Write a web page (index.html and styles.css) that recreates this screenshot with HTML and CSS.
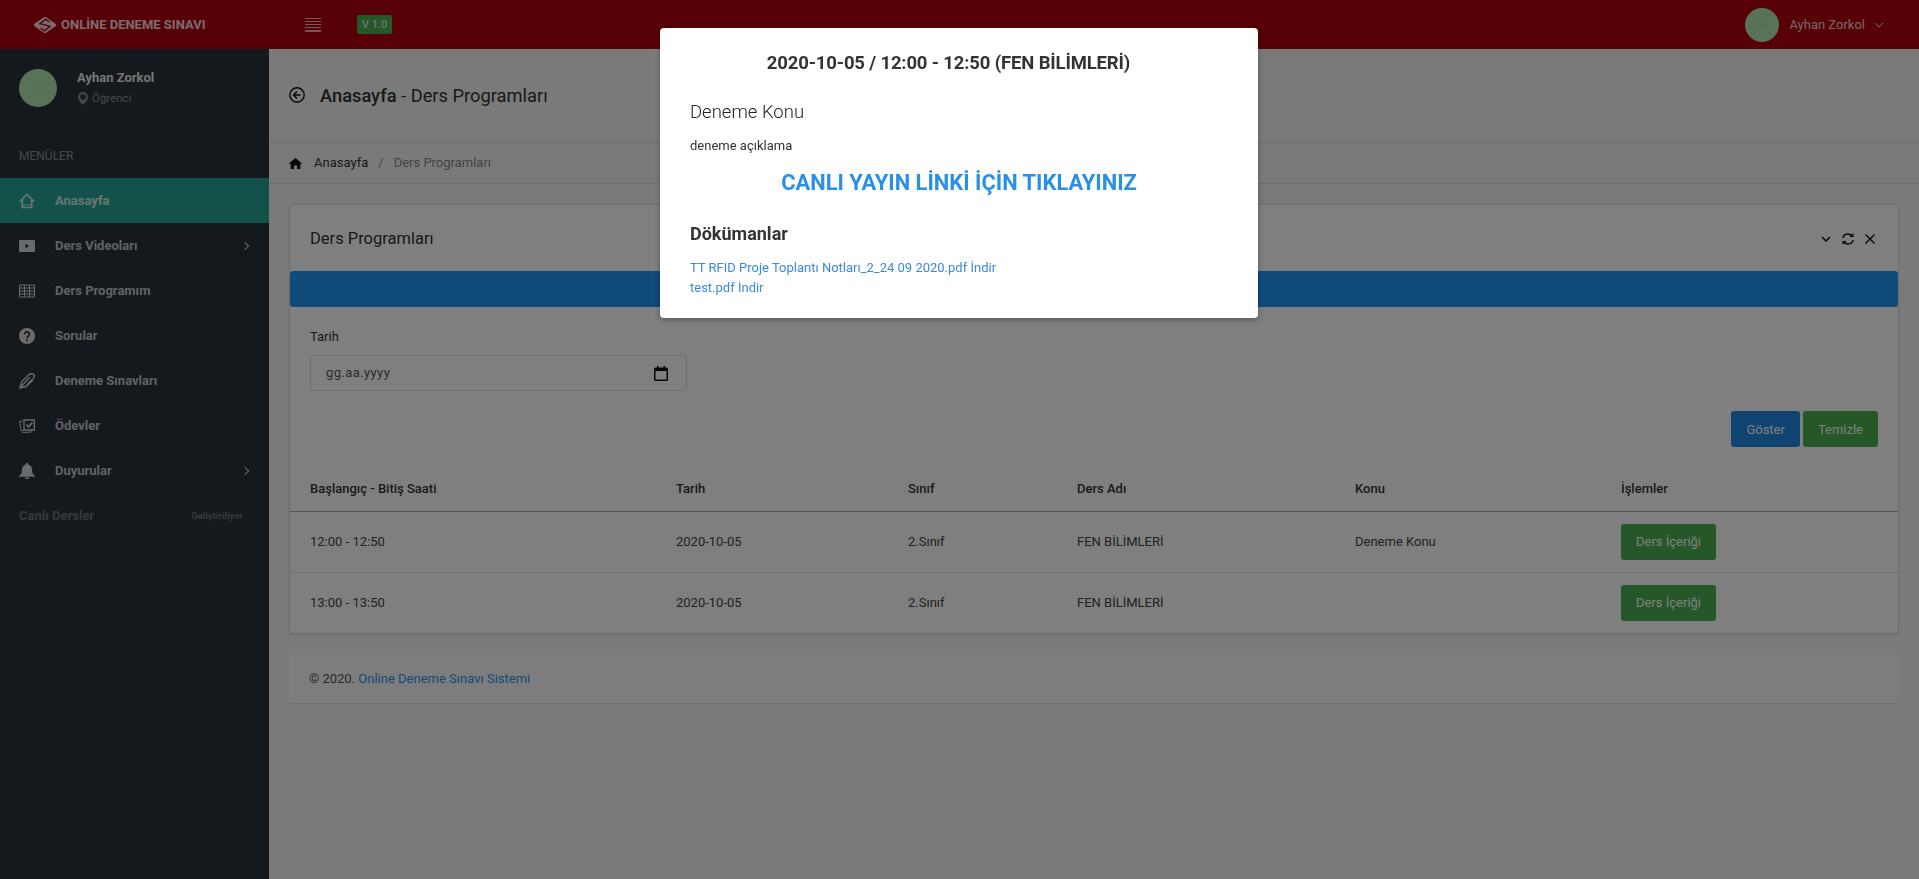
FILE: index.html
```html
<!DOCTYPE html>
<html lang="tr">
<head>
<meta charset="utf-8">
<title>Online Deneme Sınavı - Ders Programları</title>
<link rel="stylesheet" href="styles.css">
</head>
<body>

<div class="navbar">
	<div class="brand">
		<svg class="brand-logo" viewBox="0 0 22 16" width="22" height="16"><path fill="#fff" opacity=".85" d="M9.500 .6a2 2 0 0 1 3 0l9 6.200a1.400 1.400 0 0 1 0 2.400l-9 6.200a2 2 0 0 1-3 0l-9-6.200a1.400 1.400 0 0 1 0-2.400z"/><path d="M15.500 5 11.500 2.200 6 6.600 16 9.400 10.500 13.800 6.500 11" fill="none" stroke="#ae000c" stroke-width="1.400"/></svg>
		<span class="brand-text">ONLİNE DENEME SINAVI</span>
	</div>
	<div class="toggler"><span></span><span></span><span></span><span></span><span></span></div>
	<span class="version">V 1.0</span>
	<div class="nav-user">
		<svg class="avatar-s" viewBox="0 0 34 34"><circle cx="17" cy="17" r="17" fill="#b0e6b0"/><path d="M6 6 28 28M28 6 6 28" stroke="#a4d8a4" stroke-width="1"/></svg>
		<span class="nav-name">Ayhan Zorkol</span>
		<svg class="nav-caret" viewBox="0 0 10 6" width="10" height="6"><path d="M1 1l4 4 4-4" fill="none" stroke="#fff" stroke-width="1"/></svg>
	</div>
</div>

<div class="wrap">
	<div class="sidebar">
		<div class="side-user">
			<svg class="avatar" viewBox="0 0 38 38"><circle cx="19" cy="19" r="19" fill="#b0e6b0"/><path d="M6 6 32 32M32 6 6 32" stroke="#a4d8a4" stroke-width="1"/></svg>
			<div>
				<div class="side-name">Ayhan Zorkol</div>
				<div class="side-role"><svg viewBox="0 0 10 13" width="10" height="13"><path fill-rule="evenodd" fill="#fff" d="M5 0a5 5 0 0 1 5 5c0 3-3 6.200-5 8-2-1.800-5-5-5-8a5 5 0 0 1 5-5zm0 2.200a2.800 2.800 0 1 0 0 5.600 2.800 2.800 0 0 0 0-5.600z"/></svg>Öğrenci</div>
			</div>
		</div>
		<div class="side-head">MENÜLER</div>
		<ul class="menu">
			<li class="active">
				<svg viewBox="0 0 16 15"><path d="M.8 7.800 8 1.200l7.200 6.600M3.300 6.500v7.500h9.400V6.500" fill="none" stroke="#fff" stroke-width="1.700"/><path d="M3.300 11.500h9.400" stroke="#fff" stroke-width=".8"/></svg>
				<span>Anasayfa</span>
			</li>
			<li>
				<svg viewBox="0 0 16 12"><path fill-rule="evenodd" fill="#fff" d="M1.500 0h13A1.500 1.500 0 0 1 16 1.500v9a1.500 1.500 0 0 1-1.500 1.500h-13A1.500 1.500 0 0 1 0 10.500v-9A1.500 1.500 0 0 1 1.500 0zM6.500 3.800v4.400L10 6z"/></svg>
				<span>Ders Videoları</span><i class="arrow"></i>
			</li>
			<li>
				<svg viewBox="0 0 16 13"><path d="M.5.500h15v12H.5zM.5 3.500h15M.5 6.500h15M.5 9.500h15M5.500.500v12M10.500.500v12" fill="none" stroke="#fff" stroke-width="1"/></svg>
				<span>Ders Programım</span>
			</li>
			<li>
				<svg viewBox="0 0 16 16"><circle cx="8" cy="8" r="8" fill="#fff"/><path d="M5.600 6.200a2.400 2.400 0 1 1 3.700 2c-.9.600-1.300 1-1.300 1.900" fill="none" stroke="#14191e" stroke-width="1.500"/><circle cx="8" cy="12.300" r="1" fill="#14191e"/></svg>
				<span>Sorular</span>
			</li>
			<li>
				<svg viewBox="0 0 16 16"><path d="M1 15 2.800 8.500 10 1.500c2-1 4-.8 5 .2.500 2-.5 4-1.500 5.500L7 13.500zM1 15l8-9M4.500 11 11 4M8 12l5-5.500" fill="none" stroke="#fff" stroke-width="1.400"/></svg>
				<span>Deneme Sınavları</span>
			</li>
			<li>
				<svg viewBox="0 0 16 15"><path d="M5 1.500h10.300v10H5z" fill="none" stroke="#fff" stroke-width="1.300"/><path d="M7.300 6l2.200 2.500 3.800-4.300" fill="none" stroke="#fff" stroke-width="1.800"/><path d="M3.500 2.500.5 3l1.800 9.500 2.700-.5M3.300 14l9-.5v-1" fill="none" stroke="#fff" stroke-width="1"/></svg>
				<span>Ödevler</span>
			</li>
			<li>
				<svg viewBox="0 0 16 16"><path fill="#fff" d="M8 0a1.200 1.200 0 0 1 1.200 1.500C11.500 2.100 13 4 13 6.500c0 3.500.8 5 3 6.500v.8H0V13c2.200-1.500 3-3 3-6.500C3 4 4.500 2.100 6.800 1.500A1.200 1.200 0 0 1 8 0zM6 14.500h4a2 2 0 0 1-4 0z"/></svg>
				<span>Duyurular</span><i class="arrow"></i>
			</li>
			<li class="muted">
				<span>Canlı Dersler</span><small>Geliştiriliyor</small>
			</li>
		</ul>
	</div>

	<div class="content">
		<div class="page-header">
			<svg viewBox="0 0 16 16" width="16" height="16"><circle cx="8" cy="8" r="7.200" fill="none" stroke="#111" stroke-width="1.400"/><path d="M8 4.500 4.500 8 8 11.500M4.500 8h7" fill="none" stroke="#111" stroke-width="1.400"/></svg>
			<h4><b>Anasayfa</b> - Ders Programları</h4>
		</div>
		<div class="breadcrumb">
			<svg viewBox="0 0 13 11" width="13" height="11"><path fill="#111" d="M6.500 0 13 5.500l-.7.800-1-.8V11H8V7.500H5V11H1.700V5.500l-1 .8L0 5.500z"/></svg>
			<span class="crumb">Anasayfa</span><span class="sep">/</span><span class="crumb-now">Ders Programları</span>
		</div>

		<div class="page-body">
			<div class="card">
				<div class="card-head">
					<h5>Ders Programları</h5>
					<div class="card-tools">
						<svg viewBox="0 0 12 12" width="12" height="12"><path d="M2 4l4 4 4-4" fill="none" stroke="#111" stroke-width="1.500"/></svg>
						<svg viewBox="0 0 14 14" width="14" height="14"><path d="M2 6C2.300 3.500 4.500 2 7 2c1.700 0 3 .7 4 2M12 8c-.3 2.500-2.500 4-5 4-1.700 0-3-.7-4-2" fill="none" stroke="#111" stroke-width="1.500"/><path d="M12.500 1v4h-4zM1.500 13V9h4z" fill="#111"/></svg>
						<svg viewBox="0 0 12 12" width="12" height="12"><path d="M1.500 1.500l9 9M10.500 1.500l-9 9" fill="none" stroke="#111" stroke-width="1.400"/></svg>
					</div>
				</div>
				<div class="blue-bar"></div>
				<div class="filter">
					<label>Tarih</label>
					<div class="date-input">
						<span>gg.aa.yyyy</span>
						<svg viewBox="0 0 14 15" width="14" height="15"><path fill-rule="evenodd" fill="#111" d="M3 0h1.500v1.500h5V0H11v1.500h1.500A1.500 1.500 0 0 1 14 3v10.500a1.500 1.500 0 0 1-1.500 1.500h-11A1.500 1.500 0 0 1 0 13.500V3a1.500 1.500 0 0 1 1.500-1.500H3zM1.500 5v8.500h11V5z"/></svg>
					</div>
					<div class="filter-btns">
						<button class="btn btn-blue">Göster</button>
						<button class="btn btn-green">Temizle</button>
					</div>
				</div>
				<table class="grid">
					<thead>
						<tr><th>Başlangıç - Bitiş Saati</th><th>Tarih</th><th>Sınıf</th><th>Ders Adı</th><th>Konu</th><th>İşlemler</th></tr>
					</thead>
					<tbody>
						<tr><td>12:00 - 12:50</td><td>2020-10-05</td><td>2.Sınıf</td><td>FEN BİLİMLERİ</td><td>Deneme Konu</td><td><button class="btn btn-green">Ders İçeriği</button></td></tr>
						<tr><td>13:00 - 13:50</td><td>2020-10-05</td><td>2.Sınıf</td><td>FEN BİLİMLERİ</td><td></td><td><button class="btn btn-green">Ders İçeriği</button></td></tr>
					</tbody>
				</table>
			</div>
			<div class="footer">© 2020. <a href="#">Online Deneme Sınavı Sistemi</a></div>
		</div>
	</div>
</div>

<div class="backdrop">
	<div class="modal">
		<h3 class="modal-title">2020-10-05 / 12:00 - 12:50 (FEN BİLİMLERİ)</h3>
		<div class="modal-topic">Deneme Konu</div>
		<p class="modal-desc">deneme açıklama</p>
		<a class="modal-live" href="#">CANLI YAYIN LİNKİ İÇİN TIKLAYINIZ</a>
		<h4 class="modal-docs">Dökümanlar</h4>
		<a class="modal-file" href="#">TT RFID Proje Toplantı Notları_2_24 09 2020.pdf İndir</a>
		<a class="modal-file" href="#">test.pdf İndir</a>
	</div>
</div>

</body>
</html>
```

FILE: styles.css
```css
* {
	box-sizing: border-box;
}
html, body {
	margin: 0;
	padding: 0;
	height: 100%;
	overflow: hidden;
	background-color: #f5f5f5;
	color: #333;
	font-family: Roboto, sans-serif;
	font-size: 13px;
	line-height: 20px;
}
a {
	color: #2196f3;
	text-decoration: none;
}

/* top bar */
.navbar {
	height: 49px;
	background-color: #ae000c;
	color: #fff;
	display: flex;
	align-items: center;
}
.brand {
	width: 305px;
	padding-left: 34px;
	display: flex;
	align-items: center;
	gap: 5px;
}
.brand-text {
	font-size: 13px;
	font-weight: 700;
	opacity: .85;
}
.toggler {
	width: 16px;
	height: 14px;
	display: flex;
	flex-direction: column;
	justify-content: space-between;
	margin-right: 36px;
}
.toggler span {
	height: 1.500px;
	background-color: #fff;
	opacity: .7;
}
.version {
	width: 35px;
	height: 19px;
	background-color: #4caf50;
	border-radius: 2px;
	font-size: 11px;
	font-weight: 500;
	line-height: 19px;
	text-align: center;
	color: rgba(255,255,255,.8);
}
.nav-user {
	margin-left: auto;
	padding-right: 35px;
	display: flex;
	align-items: center;
}
.avatar-s {
	width: 34px;
	height: 34px;
	margin-right: 10px;
}
.nav-name {
	margin-right: 9px;
	opacity: .8;
}
.nav-caret {
	opacity: .8;
}

/* layout */
.wrap {
	display: flex;
	height: 830px;
}
.sidebar {
	width: 269px;
	flex: none;
	background-color: #28323c;
	color: #fff;
}
.content {
	flex: 1;
}

/* sidebar */
.side-user {
	display: flex;
	gap: 20px;
	padding: 20px 19px 0;
	height: 91px;
}
.avatar {
	width: 38px;
	height: 38px;
}
.side-name {
	font-weight: 700;
	margin-top: -1px;
	opacity: .9;
}
.side-role {
	display: flex;
	align-items: center;
	gap: 4px;
	font-size: 11.500px;
	color: #fff;
	opacity: .45;
}
.side-role svg {
	margin-left: 1px;
}
.side-head {
	padding: 0 19px;
	height: 38px;
	font-size: 12px;
	line-height: 32px;
	opacity: .45;
}
.menu {
	list-style: none;
	margin: 0;
	padding: 0;
}
.menu li {
	height: 45px;
	padding: 0 19px;
	display: flex;
	align-items: center;
	font-weight: 700;
	color: rgba(255,255,255,.72);
}
.menu li svg {
	width: 16px;
	height: 16px;
	margin-right: 20px;
	opacity: .8;
}
.menu li.active {
	background-color: #26a595;
	color: rgba(255,255,255,.8);
}
.arrow {
	margin-left: auto;
	margin-right: 2px;
	width: 6px;
	height: 6px;
	border-top: 1.500px solid #fff;
	border-right: 1.500px solid #fff;
	transform: rotate(45deg);
	opacity: .8;
}
.menu li.muted {
	color: rgba(255,255,255,.32);
	justify-content: space-between;
	padding-right: 26px;
}
.muted small {
	font-size: 9.500px;
}

/* page heading */
.page-header {
	height: 94px;
	padding: 0 20px;
	display: flex;
	align-items: center;
	gap: 15px;
	border-bottom: 1px solid #ddd;
}
.page-header svg {
	flex: none;
	margin-top: -1px;
}
.page-header h4 {
	margin: 0;
	font-size: 18.300px;
	font-weight: 400;
	color: #333;
}
.page-header b {
	font-weight: 500;
}
.breadcrumb {
	height: 41px;
	padding: 0 20px;
	display: flex;
	align-items: center;
	border-bottom: 1px solid #ddd;
}
.crumb {
	margin-left: 12px;
	color: #333;
}
.sep {
	margin: 0 10px;
	color: #888;
}
.crumb-now {
	color: #888;
}

/* card */
.page-body {
	padding: 20px 20px 0;
}
.card {
	background-color: #fff;
	border: 1px solid #ddd;
	border-radius: 4px;
	box-shadow: 0 1px 2px rgba(0,0,0,.1);
}
.card-head {
	height: 66px;
	padding: 1px 20px 0;
	display: flex;
	align-items: center;
	justify-content: space-between;
}
.card-head h5 {
	margin: 0;
	font-size: 16.500px;
	font-weight: 400;
	color: #333;
}
.card-tools {
	display: flex;
	align-items: center;
	gap: 9px;
	margin-right: 2px;
}
.blue-bar {
	height: 36px;
	background-color: #2196f3;
	border-radius: 3px;
}
.filter {
	padding: 20px 20px 0;
}
.filter label {
	display: block;
	margin-bottom: 8px;
	line-height: 20px;
}
.date-input {
	width: 377px;
	height: 36px;
	padding: 0 18px 0 15px;
	border: 1px solid #ddd;
	border-radius: 3px;
	display: flex;
	align-items: center;
	justify-content: space-between;
	color: #555;
	letter-spacing: .4px;
}
.filter-btns {
	display: flex;
	justify-content: flex-end;
	gap: 3px;
	margin-top: 20px;
}
.btn {
	height: 36px;
	padding: 0 15px;
	border: 0;
	border-radius: 3px;
	color: #fff;
	font-family: Roboto, sans-serif;
	font-size: 13px;
}
.btn-blue {
	background-color: #1e88e5;
}
.btn-green {
	background-color: #4caf50;
}
.grid {
	width: 100%;
	border-collapse: collapse;
	table-layout: fixed;
	margin-top: 20px;
}
.grid th {
	height: 44px;
	padding: 0 0 0 20px;
	text-align: left;
	font-weight: 500;
	color: #333;
	border-bottom: 1px solid #aaa;
}
.grid td {
	height: 61px;
	padding: 0 0 0 20px;
	border-top: 1px solid #ddd;
	color: #444;
}
.grid th:nth-child(1) {
	width: 366px;
}
.grid th:nth-child(2) {
	width: 232px;
}
.grid th:nth-child(3) {
	width: 169px;
}
.grid th:nth-child(4) {
	width: 278px;
}
.grid th:nth-child(5) {
	width: 266px;
}

/* footer */
.footer {
	margin-top: 20px;
	height: 50px;
	padding: 0 20px;
	line-height: 50px;
	background-color: #fafafa;
	border-bottom: 1px solid #ddd;
	color: #555;
}

/* modal */
.backdrop {
	position: fixed;
	top: 0;
	left: 0;
	right: 0;
	bottom: 0;
	background-color: rgba(0,0,0,.5);
	display: flex;
	justify-content: center;
	align-items: flex-start;
	padding: 28px 1px 0 0;
}
.modal {
	width: 598px;
	height: 290px;
	padding: 21px 30px 0;
	background-color: #fff;
	border-radius: 4px;
	box-shadow: 0 2px 6px rgba(0,0,0,.3);
}
.modal-title {
	margin: 0;
	padding-right: 21px;
	font-size: 18.500px;
	font-weight: 700;
	letter-spacing: -.15px;
	line-height: 28px;
	text-align: center;
	color: #333;
}
.modal-topic {
	margin-top: 21px;
	font-size: 18.500px;
	font-weight: 300;
	line-height: 28px;
	color: #222;
}
.modal-desc {
	margin: 10px 0 0;
	line-height: 20px;
	color: #333;
}
.modal-live {
	display: block;
	margin-top: 11px;
	font-size: 21.900px;
	font-weight: 700;
	line-height: 32px;
	text-align: center;
	color: #2a8fe6;
}
.modal-docs {
	margin: 21px 0 0;
	font-size: 18px;
	font-weight: 700;
	line-height: 28px;
	color: #333;
}
.modal-file {
	display: block;
	color: #3b8ad9;
}
.modal-docs + .modal-file {
	margin-top: 10px;
}
```
